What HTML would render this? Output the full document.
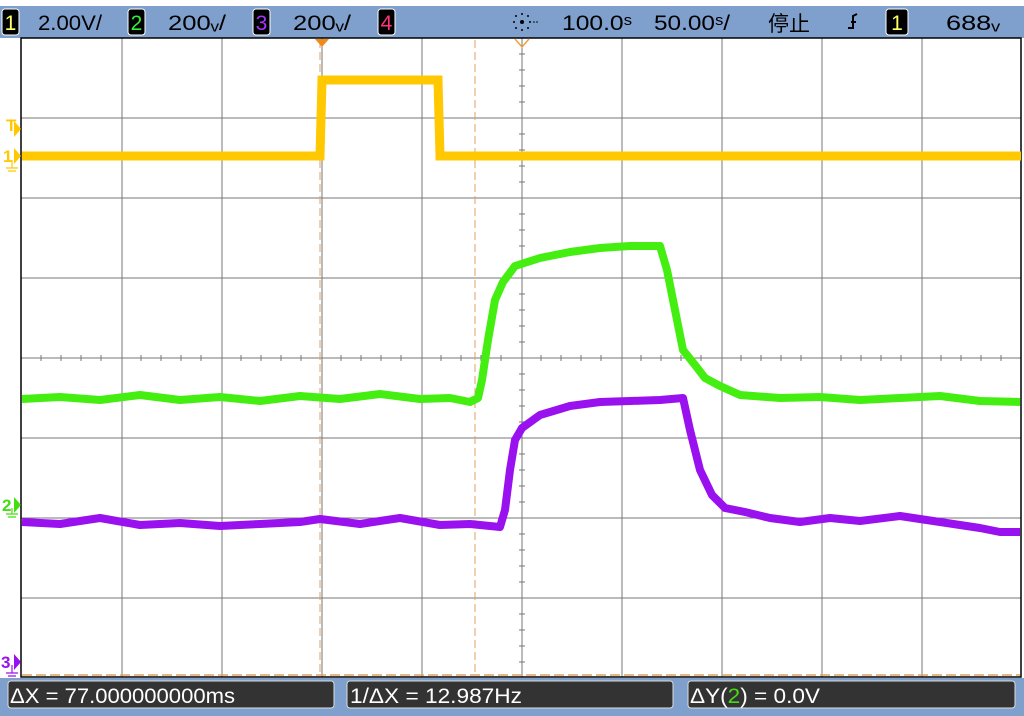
<!DOCTYPE html>
<html><head><meta charset="utf-8"><style>
html,body{margin:0;padding:0;background:#fff;width:1024px;height:716px;overflow:hidden}
svg{display:block}
text{font-family:"Liberation Sans","Noto Sans CJK SC",sans-serif}
</style></head><body>
<svg width="1024" height="716" viewBox="0 0 1024 716">
<rect x="0" y="0" width="1024" height="716" fill="#fff"/>
<!-- top bar -->
<rect x="0" y="6" width="1024" height="32" fill="#7f9fcd"/>
<rect x="2" y="9" width="17" height="26" rx="3" fill="#000" stroke="#fff" stroke-width="1"/>
<text x="10.5" y="30" font-size="21" fill="#ffff66" text-anchor="middle">1</text>
<text x="38" y="30" font-size="21" fill="#000" textLength="64" lengthAdjust="spacingAndGlyphs">2.00V/</text>
<rect x="128" y="9" width="17" height="26" rx="3" fill="#000" stroke="#fff"/>
<text x="136.5" y="30" font-size="21" fill="#33ee33" text-anchor="middle">2</text>
<text x="168" y="30" font-size="21" fill="#000" textLength="58" lengthAdjust="spacingAndGlyphs">200ᵥ/</text>
<rect x="253" y="9" width="17" height="26" rx="3" fill="#000" stroke="#fff"/>
<text x="261.5" y="30" font-size="21" fill="#aa33ff" text-anchor="middle">3</text>
<text x="293" y="30" font-size="21" fill="#000" textLength="58" lengthAdjust="spacingAndGlyphs">200ᵥ/</text>
<rect x="378" y="9" width="17" height="26" rx="3" fill="#000" stroke="#fff"/>
<text x="386.5" y="30" font-size="21" fill="#ff3377" text-anchor="middle">4</text>
<g fill="#000"><circle cx="522" cy="22" r="2"/><circle cx="514" cy="22" r="1"/><circle cx="530" cy="22" r="1"/><circle cx="522" cy="14" r="1"/><circle cx="522" cy="30" r="1"/><circle cx="516" cy="16" r="1"/><circle cx="528" cy="16" r="1"/><circle cx="516" cy="28" r="1"/><circle cx="528" cy="28" r="1"/><circle cx="534" cy="22" r="0.8"/><circle cx="537" cy="22" r="0.8"/></g>
<text x="562" y="30" font-size="21" fill="#000" textLength="70" lengthAdjust="spacingAndGlyphs">100.0ˢ</text>
<text x="654" y="30" font-size="21" fill="#000" textLength="76" lengthAdjust="spacingAndGlyphs">50.00ˢ/</text>
<text x="768" y="31" font-size="21" fill="#000">停止</text>
<path d="M848 28h5v-12l4 -2M851 22h5" stroke="#000" stroke-width="2" fill="none"/>
<rect x="886" y="9" width="22" height="26" rx="3" fill="#000" stroke="#fff"/>
<text x="897" y="30" font-size="21" fill="#ffff66" text-anchor="middle">1</text>
<text x="946" y="30" font-size="21" fill="#000" textLength="54" lengthAdjust="spacingAndGlyphs">688ᵥ</text>
<!-- grid -->
<g stroke="#777" stroke-width="1">
<line x1="122" y1="38" x2="122" y2="677"/><line x1="222" y1="38" x2="222" y2="677"/>
<line x1="322" y1="38" x2="322" y2="677"/><line x1="422" y1="38" x2="422" y2="677"/>
<line x1="522" y1="38" x2="522" y2="677"/><line x1="622" y1="38" x2="622" y2="677"/>
<line x1="722" y1="38" x2="722" y2="677"/><line x1="822" y1="38" x2="822" y2="677"/>
<line x1="922" y1="38" x2="922" y2="677"/>
<line x1="21" y1="118" x2="1021" y2="118"/><line x1="21" y1="198" x2="1021" y2="198"/>
<line x1="21" y1="278" x2="1021" y2="278"/><line x1="21" y1="358" x2="1021" y2="358"/>
<line x1="21" y1="438" x2="1021" y2="438"/><line x1="21" y1="518" x2="1021" y2="518"/>
<line x1="21" y1="598" x2="1021" y2="598"/>
</g>
<g stroke="#777" stroke-width="1">
<path d="M41 355v6M61 355v6M81 355v6M101 355v6M141 355v6M161 355v6M181 355v6M201 355v6M241 355v6M261 355v6M281 355v6M301 355v6M341 355v6M361 355v6M381 355v6M401 355v6M441 355v6M461 355v6M481 355v6M501 355v6M541 355v6M561 355v6M581 355v6M601 355v6M641 355v6M661 355v6M681 355v6M701 355v6M741 355v6M761 355v6M781 355v6M801 355v6M841 355v6M861 355v6M881 355v6M901 355v6M941 355v6M961 355v6M981 355v6M1001 355v6"/>
<path d="M519 54h6M519 70h6M519 86h6M519 102h6M519 134h6M519 150h6M519 166h6M519 182h6M519 214h6M519 230h6M519 246h6M519 262h6M519 294h6M519 310h6M519 326h6M519 342h6M519 374h6M519 390h6M519 406h6M519 422h6M519 454h6M519 470h6M519 486h6M519 502h6M519 534h6M519 550h6M519 566h6M519 582h6M519 614h6M519 630h6M519 646h6M519 662h6"/>
</g>
<rect x="21" y="38" width="1000" height="639" fill="none" stroke="#000" stroke-width="1.5"/>
<!-- cursors -->
<line x1="320" y1="40" x2="320" y2="676" stroke="#e0a060" stroke-width="1" stroke-dasharray="8,4"/>
<line x1="475" y1="40" x2="475" y2="676" stroke="#e0a060" stroke-width="1" stroke-dasharray="8,4"/>
<line x1="22" y1="675" x2="1020" y2="675" stroke="#e0a060" stroke-width="1.5" stroke-dasharray="10,4"/>
<path d="M315 39h14l-7 8z" fill="#f08a20"/>
<path d="M515 39l7 8l7-8" fill="none" stroke="#f0a040" stroke-width="1.5"/>
<!-- yellow -->
<polyline fill="none" stroke="#ffc800" stroke-width="9" points="22,156 320,156 322,80 438,80 440,156 1021,156"/>
<!-- green -->
<polyline fill="none" stroke="#44ee11" stroke-width="8" stroke-linejoin="round" points="22,399 60,397 100,400 140,395 180,400 220,397 260,401 300,396 340,399 380,394 420,399 450,398 470,402 478,398 482,380 488,340 495,300 503,282 515,266 540,258 570,252 600,248 630,246 660,246 667,270 675,310 683,350 695,365 705,378 720,386 740,395 780,398 820,397 860,400 900,398 940,396 980,401 1020,402"/>
<!-- purple -->
<polyline fill="none" stroke="#9911ee" stroke-width="8" stroke-linejoin="round" points="22,522 60,524 100,518 140,525 180,523 220,526 260,524 300,522 320,519 360,524 400,518 440,525 470,524 500,527 505,510 510,470 515,440 522,428 540,415 570,406 600,402 630,401 660,400 683,398 690,430 700,470 712,495 725,508 745,512 770,518 800,522 830,518 860,521 900,516 940,522 980,528 1000,532 1020,532"/>
<!-- left markers -->
<text x="6" y="131" font-size="17" font-weight="bold" fill="#ffc800">T</text>
<path d="M14 121l7 8l-7 8z" fill="#ffc800"/>
<text x="3" y="162" font-size="17" font-weight="bold" fill="#ffc800">1</text>
<path d="M14 148l7 8l-7 8z" fill="#ffc800"/>
<path d="M12 160v8M6 168h12M8 171h8" stroke="#ffc800" stroke-width="1.2"/>
<text x="2" y="511" font-size="17" font-weight="bold" fill="#44dd11">2</text>
<path d="M14 497l7 8l-7 8z" fill="#44dd11"/>
<path d="M12 508v6M6 514h12M8 517h8" stroke="#44dd11" stroke-width="1.2"/>
<text x="1" y="668" font-size="17" font-weight="bold" fill="#9911ee">3</text>
<path d="M14 654l7 8l-7 8z" fill="#9911ee"/>
<path d="M12 665v8M6 673h12M8 676h8" stroke="#9911ee" stroke-width="1.2"/>
<!-- bottom bar -->
<rect x="0" y="678" width="1024" height="38" fill="#7f9fcd"/>
<rect x="8" y="681" width="326" height="27" rx="3" fill="#333" stroke="#ddd" stroke-width="1"/>
<text x="10" y="703" font-size="21" fill="#fff" textLength="225" lengthAdjust="spacingAndGlyphs">ΔX = 77.000000000ms</text>
<rect x="347" y="681" width="326" height="27" rx="3" fill="#333" stroke="#ddd" stroke-width="1"/>
<text x="350" y="703" font-size="21" fill="#fff" textLength="172" lengthAdjust="spacingAndGlyphs">1/ΔX = 12.987Hz</text>
<rect x="688" y="681" width="327" height="27" rx="3" fill="#333" stroke="#ddd" stroke-width="1"/>
<text x="690" y="703" font-size="21" fill="#fff" textLength="130" lengthAdjust="spacingAndGlyphs">ΔY(<tspan fill="#44dd11">2</tspan>) = 0.0V</text>
</svg>
</body></html>
